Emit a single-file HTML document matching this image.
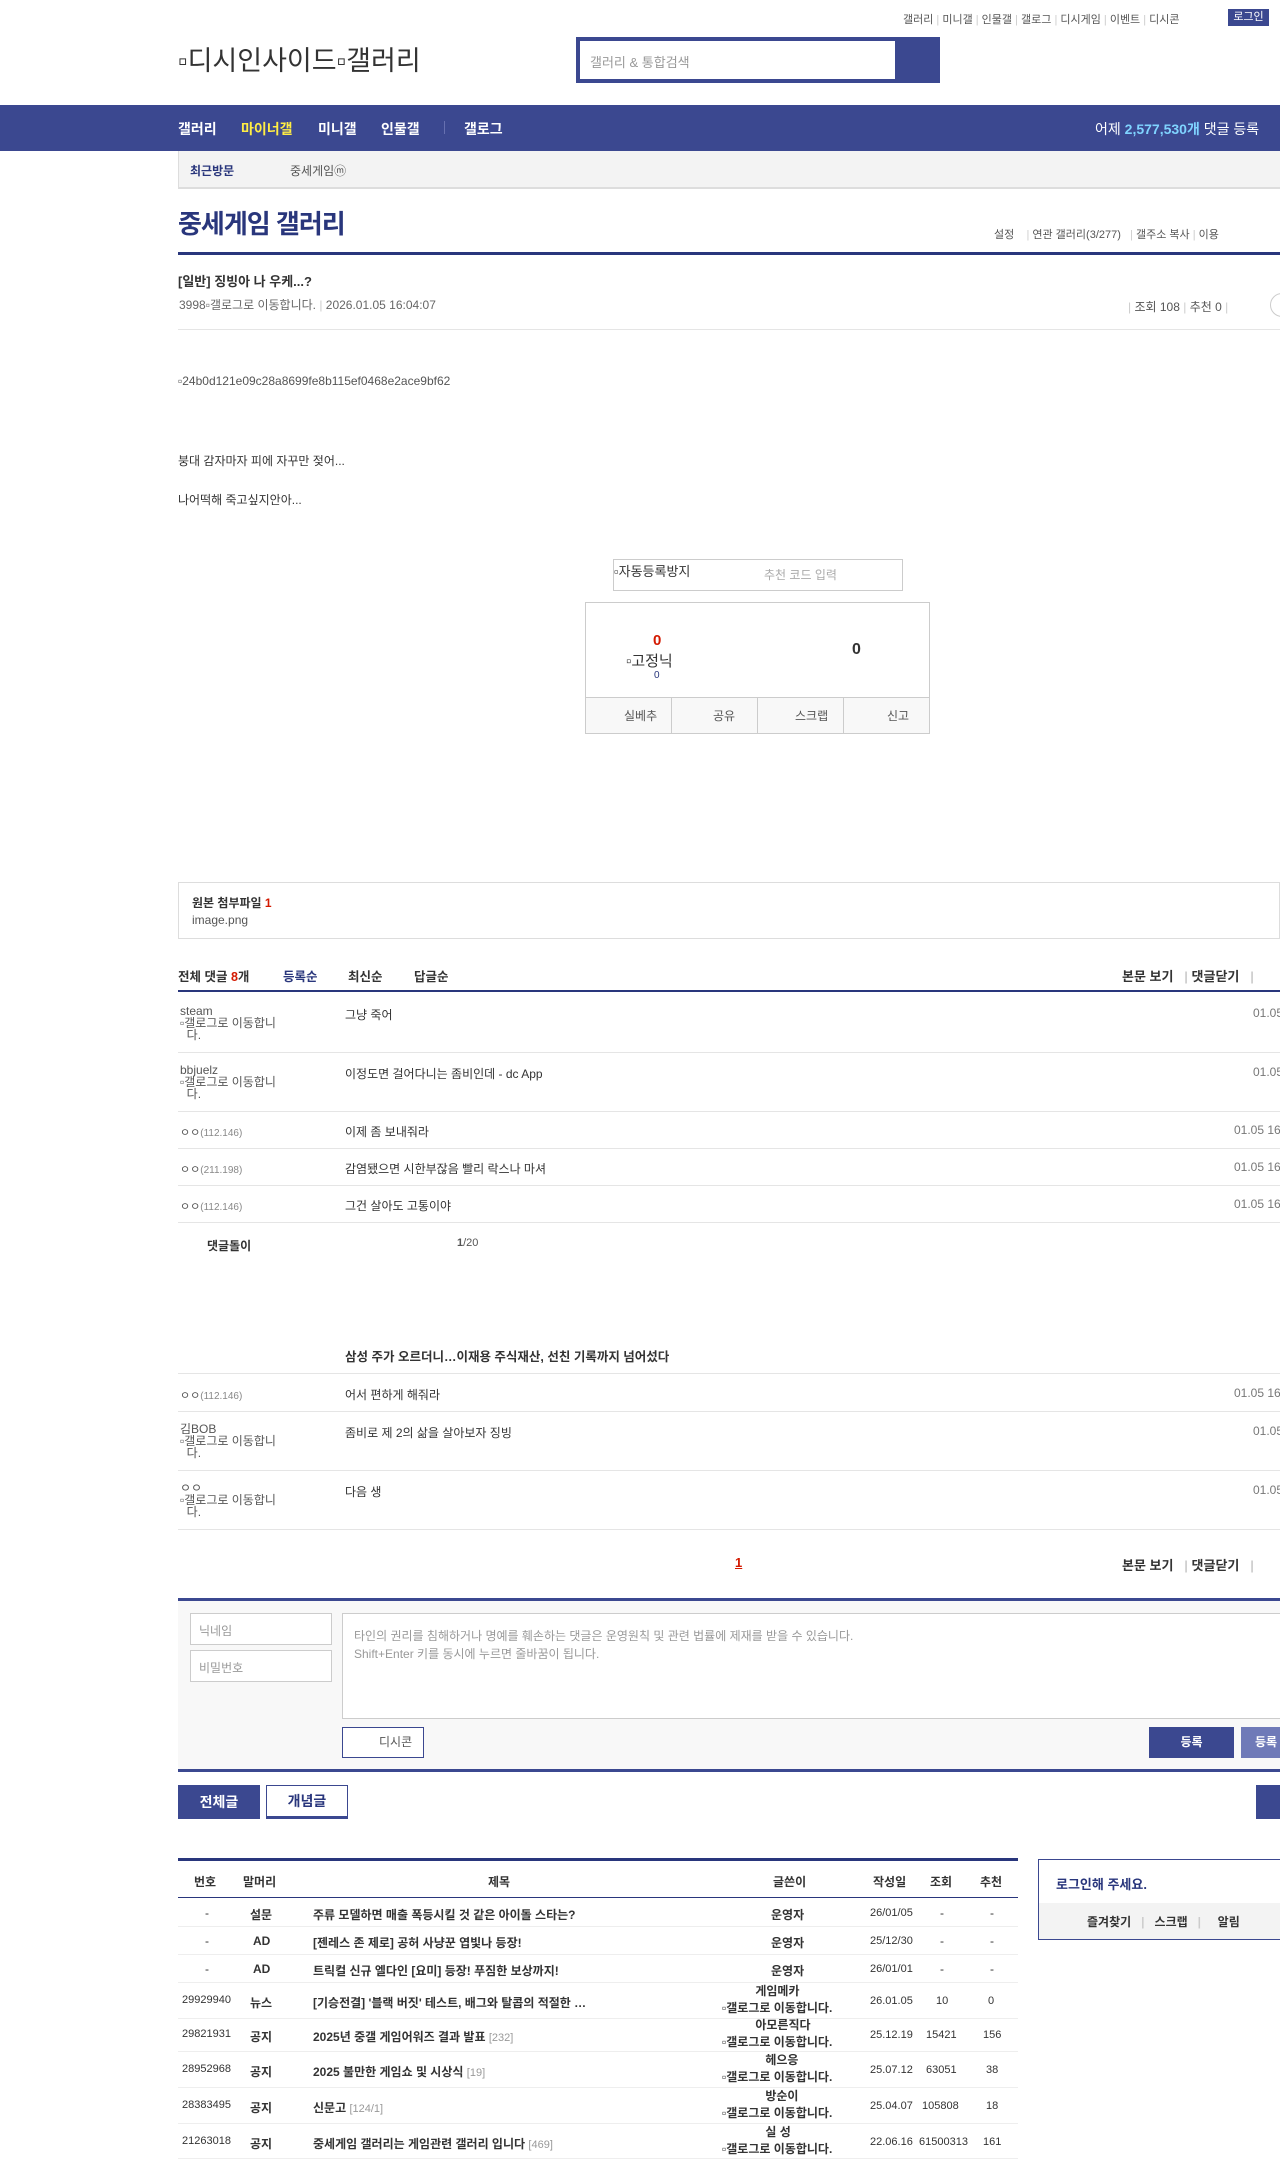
<!DOCTYPE html>
<html><head><meta charset="utf-8"><style>
*{margin:0;padding:0;box-sizing:border-box}
body{width:1280px;height:2160px;overflow:hidden;position:relative;background:#fff;font-family:"Liberation Sans","Noto Sans CJK KR",sans-serif;font-size:12px;color:#333}
.a{position:absolute;white-space:nowrap}
.nv{color:#fff;font-size:14px;font-weight:bold}
.g{color:#777}
.line{position:absolute;left:178px;width:1102px;height:1px;background:#e5e5e5}
.th{font-size:12px;font-weight:bold;color:#333}
.r{font-size:12px}
.b{font-weight:bold}
.sm{font-size:11px;color:#555}
</style></head><body>
<div class="a" style="left:903px;top:11px;font-size:11px;color:#555">갤러리 <span style="color:#ccc">|</span> 미니갤 <span style="color:#ccc">|</span> 인물갤 <span style="color:#ccc">|</span> 갤로그 <span style="color:#ccc">|</span> 디시게임 <span style="color:#ccc">|</span> 이벤트 <span style="color:#ccc">|</span> 디시콘</div>
<div class="a" style="left:1228px;top:9px;width:41px;height:17px;background:#3b4890;color:#fff;font-size:11px;text-align:center;line-height:17px">로그인</div>
<div class="a" style="left:178px;top:39px;font-size:27px;color:#333">▫디시인사이드▫갤러리</div>
<div class="a" style="left:576px;top:37px;width:364px;height:46px;background:#3b4890"></div>
<div class="a" style="left:580px;top:41px;width:315px;height:38px;background:#fff"></div>
<div class="a" style="left:590px;top:52px;font-size:13px;color:#999">갤러리 &amp; 통합검색</div>
<div class="a" style="left:0;top:105px;width:1280px;height:46px;background:#3b4890"></div>
<div class="a nv" style="left:178px;top:119px">갤러리</div>
<div class="a nv" style="left:241px;top:119px;color:#ffed44">마이너갤</div>
<div class="a nv" style="left:318px;top:119px">미니갤</div>
<div class="a nv" style="left:381px;top:119px">인물갤</div>
<div class="a" style="left:444px;top:121px;width:1px;height:13px;background:#6670b0"></div>
<div class="a nv" style="left:464px;top:119px">갤로그</div>
<div class="a" style="left:1095px;top:119px;color:#fff;font-size:14px">어제 <b style="color:#7fd3ff">2,577,530개</b> 댓글 등록</div>
<div class="a" style="left:178px;top:151px;width:1102px;height:38px;background:#f3f3f3;border-left:1px solid #ddd;border-bottom:2px solid #ddd"></div>
<div class="a" style="left:190px;top:162px;font-size:12px;font-weight:bold;color:#29367c">최근방문</div>
<div class="a" style="left:290px;top:162px;font-size:12px;color:#555">중세게임ⓜ</div>
<div class="a" style="left:178px;top:204px;font-size:26px;font-weight:bold;color:#29367c;letter-spacing:-1px">중세게임 갤러리</div>
<div class="a sm" style="left:994px;top:226px">설정 &nbsp;&nbsp;&nbsp;<span style="color:#ccc">|</span> 연관 갤러리(3/277) &nbsp;&nbsp;<span style="color:#ccc">|</span> 갤주소 복사 <span style="color:#ccc">|</span> 이용</div>
<div class="a" style="left:178px;top:252px;width:1102px;height:3px;background:#29367c"></div>
<div class="a b" style="left:178px;top:271px;font-size:13px;color:#333">[일반] 징빙아 나 우케...?</div>
<div class="a" style="left:179px;top:296px;font-size:12px;color:#666">3998▫갤로그로 이동합니다. <span style="color:#ccc">|</span> 2026.01.05 16:04:07</div>
<div class="a" style="left:1128px;top:298px;font-size:12px;color:#555"><span style="color:#ccc">|</span> 조회 108 <span style="color:#ccc">|</span> 추천 0 <span style="color:#ccc">|</span></div>
<div class="a" style="left:1270px;top:293px;width:24px;height:24px;border:1px solid #ccc;border-radius:50%"></div>
<div class="line" style="top:329px"></div>
<div class="a" style="left:178px;top:374px;font-size:12px;color:#555">▫24b0d121e09c28a8699fe8b115ef0468e2ace9bf62</div>
<div class="a" style="left:178px;top:452px;font-size:12px">붕대 감자마자 피에 자꾸만 젖어...</div>
<div class="a" style="left:178px;top:491px;font-size:12px">나어떡해 죽고싶지안아...</div>
<div class="a" style="left:613px;top:559px;width:290px;height:32px;border:1px solid #ccc"></div>
<div class="a" style="left:614px;top:561px;font-size:13px">▫자동등록방지</div>
<div class="a" style="left:764px;top:566px;font-size:12px;color:#aaa">추천 코드 입력</div>
<div class="a" style="left:585px;top:602px;width:345px;height:132px;border:1px solid #ccc"></div>
<div class="a" style="left:586px;top:697px;width:343px;height:36px;background:#f8f8f8;border-top:1px solid #ccc"></div>
<div class="a" style="left:671px;top:697px;width:1px;height:36px;background:#ccc"></div>
<div class="a" style="left:757px;top:697px;width:1px;height:36px;background:#ccc"></div>
<div class="a" style="left:843px;top:697px;width:1px;height:36px;background:#ccc"></div>
<div class="a" style="left:624px;top:707px;font-size:12px;color:#555">실베추</div>
<div class="a" style="left:713px;top:707px;font-size:12px;color:#555">공유</div>
<div class="a" style="left:795px;top:707px;font-size:12px;color:#555">스크랩</div>
<div class="a" style="left:887px;top:707px;font-size:12px;color:#555">신고</div>
<div class="a" style="left:653px;top:632px;font-size:15px;font-weight:bold;color:#d31900">0</div>
<div class="a" style="left:626px;top:650px;font-size:15px">▫고정닉</div>
<div class="a" style="left:654px;top:670px;font-size:10px;color:#29367c">0</div>
<div class="a" style="left:852px;top:641px;font-size:16px;font-weight:bold">0</div>
<div class="a" style="left:178px;top:882px;width:1102px;height:57px;border:1px solid #ddd"></div>
<div class="a b" style="left:192px;top:894px;font-size:12px">원본 첨부파일 <span style="color:#d31900">1</span></div>
<div class="a" style="left:192px;top:913px;font-size:12px;color:#555">image.png</div>
<div class="a b" style="left:178px;top:966px;font-size:12.5px">전체 댓글 <span style="color:#d31900">8</span>개</div>
<div class="a b" style="left:283px;top:966px;font-size:12.5px;color:#29367c">등록순</div>
<div class="a b" style="left:348px;top:966px;font-size:12.5px">최신순</div>
<div class="a b" style="left:414px;top:966px;font-size:12.5px">답글순</div>
<div class="a b" style="left:1122px;top:966px;font-size:13px">본문 보기 &nbsp;&nbsp;<span style="color:#ccc">|</span> 댓글닫기 <span style="color:#ccc">&nbsp;&nbsp;|</span></div>
<div class="a" style="left:178px;top:990px;width:1102px;height:2px;background:#29367c"></div>
<div class="a" style="left:180px;top:1005px;font-size:12px;color:#555;line-height:12px">steam<br>▫갤로그로 이동합니<br>&nbsp;&nbsp;다.</div>
<div class="a r" style="left:345px;top:1006px">그냥 죽어</div><div class="a g" style="left:1253px;top:1006px">01.05</div>
<div class="line" style="top:1052px"></div>
<div class="a" style="left:180px;top:1064px;font-size:12px;color:#555;line-height:12px">bbjuelz<br>▫갤로그로 이동합니<br>&nbsp;&nbsp;다.</div>
<div class="a r" style="left:345px;top:1065px">이정도면 걸어다니는 좀비인데 - dc App</div><div class="a g" style="left:1253px;top:1065px">01.05</div>
<div class="line" style="top:1111px"></div>
<div class="a sm" style="left:180px;top:1124px">ㅇㅇ<span style="color:#888;font-size:10px">(112.146)</span></div>
<div class="a r" style="left:345px;top:1123px">이제 좀 보내줘라</div><div class="a g" style="left:1234px;top:1123px">01.05 16</div>
<div class="line" style="top:1148px"></div>
<div class="a sm" style="left:180px;top:1161px">ㅇㅇ<span style="color:#888;font-size:10px">(211.198)</span></div>
<div class="a r" style="left:345px;top:1160px">감염됐으면 시한부잖음 빨리 락스나 마셔</div><div class="a g" style="left:1234px;top:1160px">01.05 16</div>
<div class="line" style="top:1185px"></div>
<div class="a sm" style="left:180px;top:1198px">ㅇㅇ<span style="color:#888;font-size:10px">(112.146)</span></div>
<div class="a r" style="left:345px;top:1197px">그건 살아도 고통이야</div><div class="a g" style="left:1234px;top:1197px">01.05 16</div>
<div class="line" style="top:1222px"></div>
<div class="a b" style="left:207px;top:1237px;font-size:12px">댓글돌이</div>
<div class="a" style="left:457px;top:1237px;font-size:11px;color:#555"><b>1</b>/20</div>
<div class="a b" style="left:345px;top:1346px;font-size:12.5px">삼성 주가 오르더니…이재용 주식재산, 선친 기록까지 넘어섰다</div>
<div class="line" style="top:1373px"></div>
<div class="a sm" style="left:180px;top:1387px">ㅇㅇ<span style="color:#888;font-size:10px">(112.146)</span></div>
<div class="a r" style="left:345px;top:1386px">어서 편하게 해줘라</div><div class="a g" style="left:1234px;top:1386px">01.05 16</div>
<div class="line" style="top:1411px"></div>
<div class="a" style="left:180px;top:1423px;font-size:12px;color:#555;line-height:12px">김BOB<br>▫갤로그로 이동합니<br>&nbsp;&nbsp;다.</div>
<div class="a r" style="left:345px;top:1424px">좀비로 제 2의 삶을 살아보자 징빙</div><div class="a g" style="left:1253px;top:1424px">01.05</div>
<div class="line" style="top:1470px"></div>
<div class="a" style="left:180px;top:1482px;font-size:12px;color:#555;line-height:12px">ㅇㅇ<br>▫갤로그로 이동합니<br>&nbsp;&nbsp;다.</div>
<div class="a r" style="left:345px;top:1483px">다음 생</div><div class="a g" style="left:1253px;top:1483px">01.05</div>
<div class="line" style="top:1529px"></div>
<div class="a b" style="left:735px;top:1555px;font-size:13px;color:#d31900;text-decoration:underline">1</div>
<div class="a b" style="left:1122px;top:1555px;font-size:13px">본문 보기 &nbsp;&nbsp;<span style="color:#ccc">|</span> 댓글닫기 <span style="color:#ccc">&nbsp;&nbsp;|</span></div>
<div class="a" style="left:178px;top:1598px;width:1102px;height:174px;background:#f8f8f8;border-top:3px solid #3b4890;border-bottom:3px solid #3b4890"></div>
<div class="a" style="left:190px;top:1613px;width:142px;height:32px;border:1px solid #ccc;background:#fff;padding:8px;color:#999;font-size:12px">닉네임</div>
<div class="a" style="left:190px;top:1650px;width:142px;height:32px;border:1px solid #ccc;background:#fff;padding:8px;color:#999;font-size:12px">비밀번호</div>
<div class="a" style="left:342px;top:1613px;width:960px;height:106px;border:1px solid #ccc;background:#fff"></div>
<div class="a" style="left:354px;top:1627px;font-size:12px;color:#999;line-height:18px">타인의 권리를 침해하거나 명예를 훼손하는 댓글은 운영원칙 및 관련 법률에 제재를 받을 수 있습니다.<br>Shift+Enter 키를 동시에 누르면 줄바꿈이 됩니다.</div>
<div class="a" style="left:342px;top:1727px;width:82px;height:31px;border:1px solid #3b4890;background:#fff;font-size:12px;color:#555;line-height:29px;padding-left:36px">디시콘</div>
<div class="a" style="left:1149px;top:1727px;width:85px;height:31px;background:#3b4890;color:#fff;font-size:12px;font-weight:bold;text-align:center;line-height:31px">등록</div>
<div class="a" style="left:1241px;top:1727px;width:85px;height:31px;background:#6f7ab8;color:#fff;font-size:12px;font-weight:bold;line-height:31px;padding-left:14px">등록</div>
<div class="a" style="left:178px;top:1785px;width:82px;height:34px;background:#3b4890;color:#fff;font-size:14px;font-weight:bold;text-align:center;line-height:34px">전체글</div>
<div class="a" style="left:266px;top:1785px;width:82px;height:34px;border:1px solid #3b4890;border-bottom:3px solid #3b4890;color:#29367c;font-size:14px;font-weight:bold;text-align:center;line-height:30px">개념글</div>
<div class="a" style="left:1256px;top:1785px;width:40px;height:34px;background:#3b4890"></div>
<div class="a" style="left:178px;top:1858px;width:840px;height:3px;background:#29367c"></div>
<div class="a th" style="left:194px;top:1873px">번호</div>
<div class="a th" style="left:243px;top:1873px">말머리</div>
<div class="a th" style="left:488px;top:1873px">제목</div>
<div class="a th" style="left:773px;top:1873px">글쓴이</div>
<div class="a th" style="left:873px;top:1873px">작성일</div>
<div class="a th" style="left:930px;top:1873px">조회</div>
<div class="a th" style="left:980px;top:1873px">추천</div>
<div class="a" style="left:178px;top:1897px;width:840px;height:1px;background:#29367c"></div>
<div class="a" style="left:205px;top:1906px">-</div><div class="a b" style="left:250px;top:1906px">설문</div><div class="a b" style="left:313px;top:1906px">주류 모델하면 매출 폭등시킬 것 같은 아이돌 스타는?</div><div class="a b" style="left:771px;top:1906px">운영자</div><div class="a" style="left:870px;top:1907px;font-size:11px">26/01/05</div><div class="a" style="left:940px;top:1906px">-</div><div class="a" style="left:990px;top:1906px">-</div>
<div class="a" style="left:178px;top:1926px;width:840px;height:1px;background:#eee"></div>
<div class="a" style="left:205px;top:1934px">-</div><div class="a b" style="left:253px;top:1934px">AD</div><div class="a b" style="left:313px;top:1934px">[젠레스 존 제로] 공허 사냥꾼 엽빛나 등장!</div><div class="a b" style="left:771px;top:1934px">운영자</div><div class="a" style="left:870px;top:1935px;font-size:11px">25/12/30</div><div class="a" style="left:940px;top:1934px">-</div><div class="a" style="left:990px;top:1934px">-</div>
<div class="a" style="left:178px;top:1954px;width:840px;height:1px;background:#eee"></div>
<div class="a" style="left:205px;top:1962px">-</div><div class="a b" style="left:253px;top:1962px">AD</div><div class="a b" style="left:313px;top:1962px">트릭컬 신규 엘다인 [요미] 등장! 푸짐한 보상까지!</div><div class="a b" style="left:771px;top:1962px">운영자</div><div class="a" style="left:870px;top:1963px;font-size:11px">26/01/01</div><div class="a" style="left:940px;top:1962px">-</div><div class="a" style="left:990px;top:1962px">-</div>
<div class="a" style="left:178px;top:1982px;width:840px;height:1px;background:#eee"></div>
<div class="a" style="left:182px;top:1994px;font-size:11px">29929940</div><div class="a b" style="left:250px;top:1994px">뉴스</div><div class="a b" style="left:313px;top:1994px">[기승전결] '블랙 버짓' 테스트, 배그와 탈콥의 적절한 …</div><div class="a b" style="left:722px;top:1983px;line-height:17px;font-size:12px">&nbsp;&nbsp;&nbsp;&nbsp;&nbsp;&nbsp;&nbsp;&nbsp;&nbsp;&nbsp;게임메카<br>▫갤로그로 이동합니다.</div><div class="a" style="left:870px;top:1995px;font-size:11px">26.01.05</div><div class="a" style="left:936px;top:1995px;font-size:11px">10</div><div class="a" style="left:988px;top:1995px;font-size:11px">0</div>
<div class="a" style="left:178px;top:2018px;width:840px;height:1px;background:#eee"></div>
<div class="a" style="left:182px;top:2028px;font-size:11px">29821931</div><div class="a b" style="left:250px;top:2028px">공지</div><div class="a b" style="left:313px;top:2028px">2025년 중갤 게임어워즈 결과 발표 <span style="color:#999;font-weight:normal;font-size:11px">[232]</span></div><div class="a b" style="left:722px;top:2017px;line-height:17px">&nbsp;&nbsp;&nbsp;&nbsp;&nbsp;&nbsp;&nbsp;&nbsp;&nbsp;&nbsp;아모른직다<br>▫갤로그로 이동합니다.</div><div class="a" style="left:870px;top:2029px;font-size:11px">25.12.19</div><div class="a" style="left:926px;top:2029px;font-size:11px">15421</div><div class="a" style="left:983px;top:2029px;font-size:11px">156</div>
<div class="a" style="left:178px;top:2051px;width:840px;height:1px;background:#eee"></div>
<div class="a" style="left:182px;top:2063px;font-size:11px">28952968</div><div class="a b" style="left:250px;top:2063px">공지</div><div class="a b" style="left:313px;top:2063px">2025 불만한 게임쇼 및 시상식 <span style="color:#999;font-weight:normal;font-size:11px">[19]</span></div><div class="a b" style="left:722px;top:2052px;line-height:17px">&nbsp;&nbsp;&nbsp;&nbsp;&nbsp;&nbsp;&nbsp;&nbsp;&nbsp;&nbsp;&nbsp;&nbsp;&nbsp;헤으응<br>▫갤로그로 이동합니다.</div><div class="a" style="left:870px;top:2064px;font-size:11px">25.07.12</div><div class="a" style="left:926px;top:2064px;font-size:11px">63051</div><div class="a" style="left:986px;top:2064px;font-size:11px">38</div>
<div class="a" style="left:178px;top:2087px;width:840px;height:1px;background:#eee"></div>
<div class="a" style="left:182px;top:2099px;font-size:11px">28383495</div><div class="a b" style="left:250px;top:2099px">공지</div><div class="a b" style="left:313px;top:2099px">신문고 <span style="color:#999;font-weight:normal;font-size:11px">[124/1]</span></div><div class="a b" style="left:722px;top:2088px;line-height:17px">&nbsp;&nbsp;&nbsp;&nbsp;&nbsp;&nbsp;&nbsp;&nbsp;&nbsp;&nbsp;&nbsp;&nbsp;&nbsp;방순이<br>▫갤로그로 이동합니다.</div><div class="a" style="left:870px;top:2100px;font-size:11px">25.04.07</div><div class="a" style="left:922px;top:2100px;font-size:11px">105808</div><div class="a" style="left:986px;top:2100px;font-size:11px">18</div>
<div class="a" style="left:178px;top:2123px;width:840px;height:1px;background:#eee"></div>
<div class="a" style="left:182px;top:2135px;font-size:11px">21263018</div><div class="a b" style="left:250px;top:2135px">공지</div><div class="a b" style="left:313px;top:2135px">중세게임 갤러리는 게임관련 갤러리 입니다 <span style="color:#999;font-weight:normal;font-size:11px">[469]</span></div><div class="a b" style="left:722px;top:2124px;line-height:17px">&nbsp;&nbsp;&nbsp;&nbsp;&nbsp;&nbsp;&nbsp;&nbsp;&nbsp;&nbsp;&nbsp;&nbsp;&nbsp;실 성<br>▫갤로그로 이동합니다.</div><div class="a" style="left:870px;top:2136px;font-size:11px">22.06.16</div><div class="a" style="left:919px;top:2136px;font-size:11px">61500313</div><div class="a" style="left:983px;top:2136px;font-size:11px">161</div>
<div class="a" style="left:178px;top:2158px;width:840px;height:1px;background:#eee"></div>
<div class="a" style="left:1038px;top:1859px;width:260px;height:81px;border:1px solid #3b4890;background:#fff"></div>
<div class="a" style="left:1039px;top:1903px;width:260px;height:36px;background:#f3f3f3"></div>
<div class="a b" style="left:1056px;top:1874px;font-size:13px;color:#29367c">로그인해 주세요.</div>
<div class="a b" style="left:1087px;top:1913px;font-size:12px">즐겨찾기 &nbsp;&nbsp;<span style="color:#ccc">|</span> &nbsp;&nbsp;스크랩 &nbsp;&nbsp;<span style="color:#ccc">|</span> &nbsp;&nbsp;&nbsp;&nbsp;알림</div>
</body></html>
